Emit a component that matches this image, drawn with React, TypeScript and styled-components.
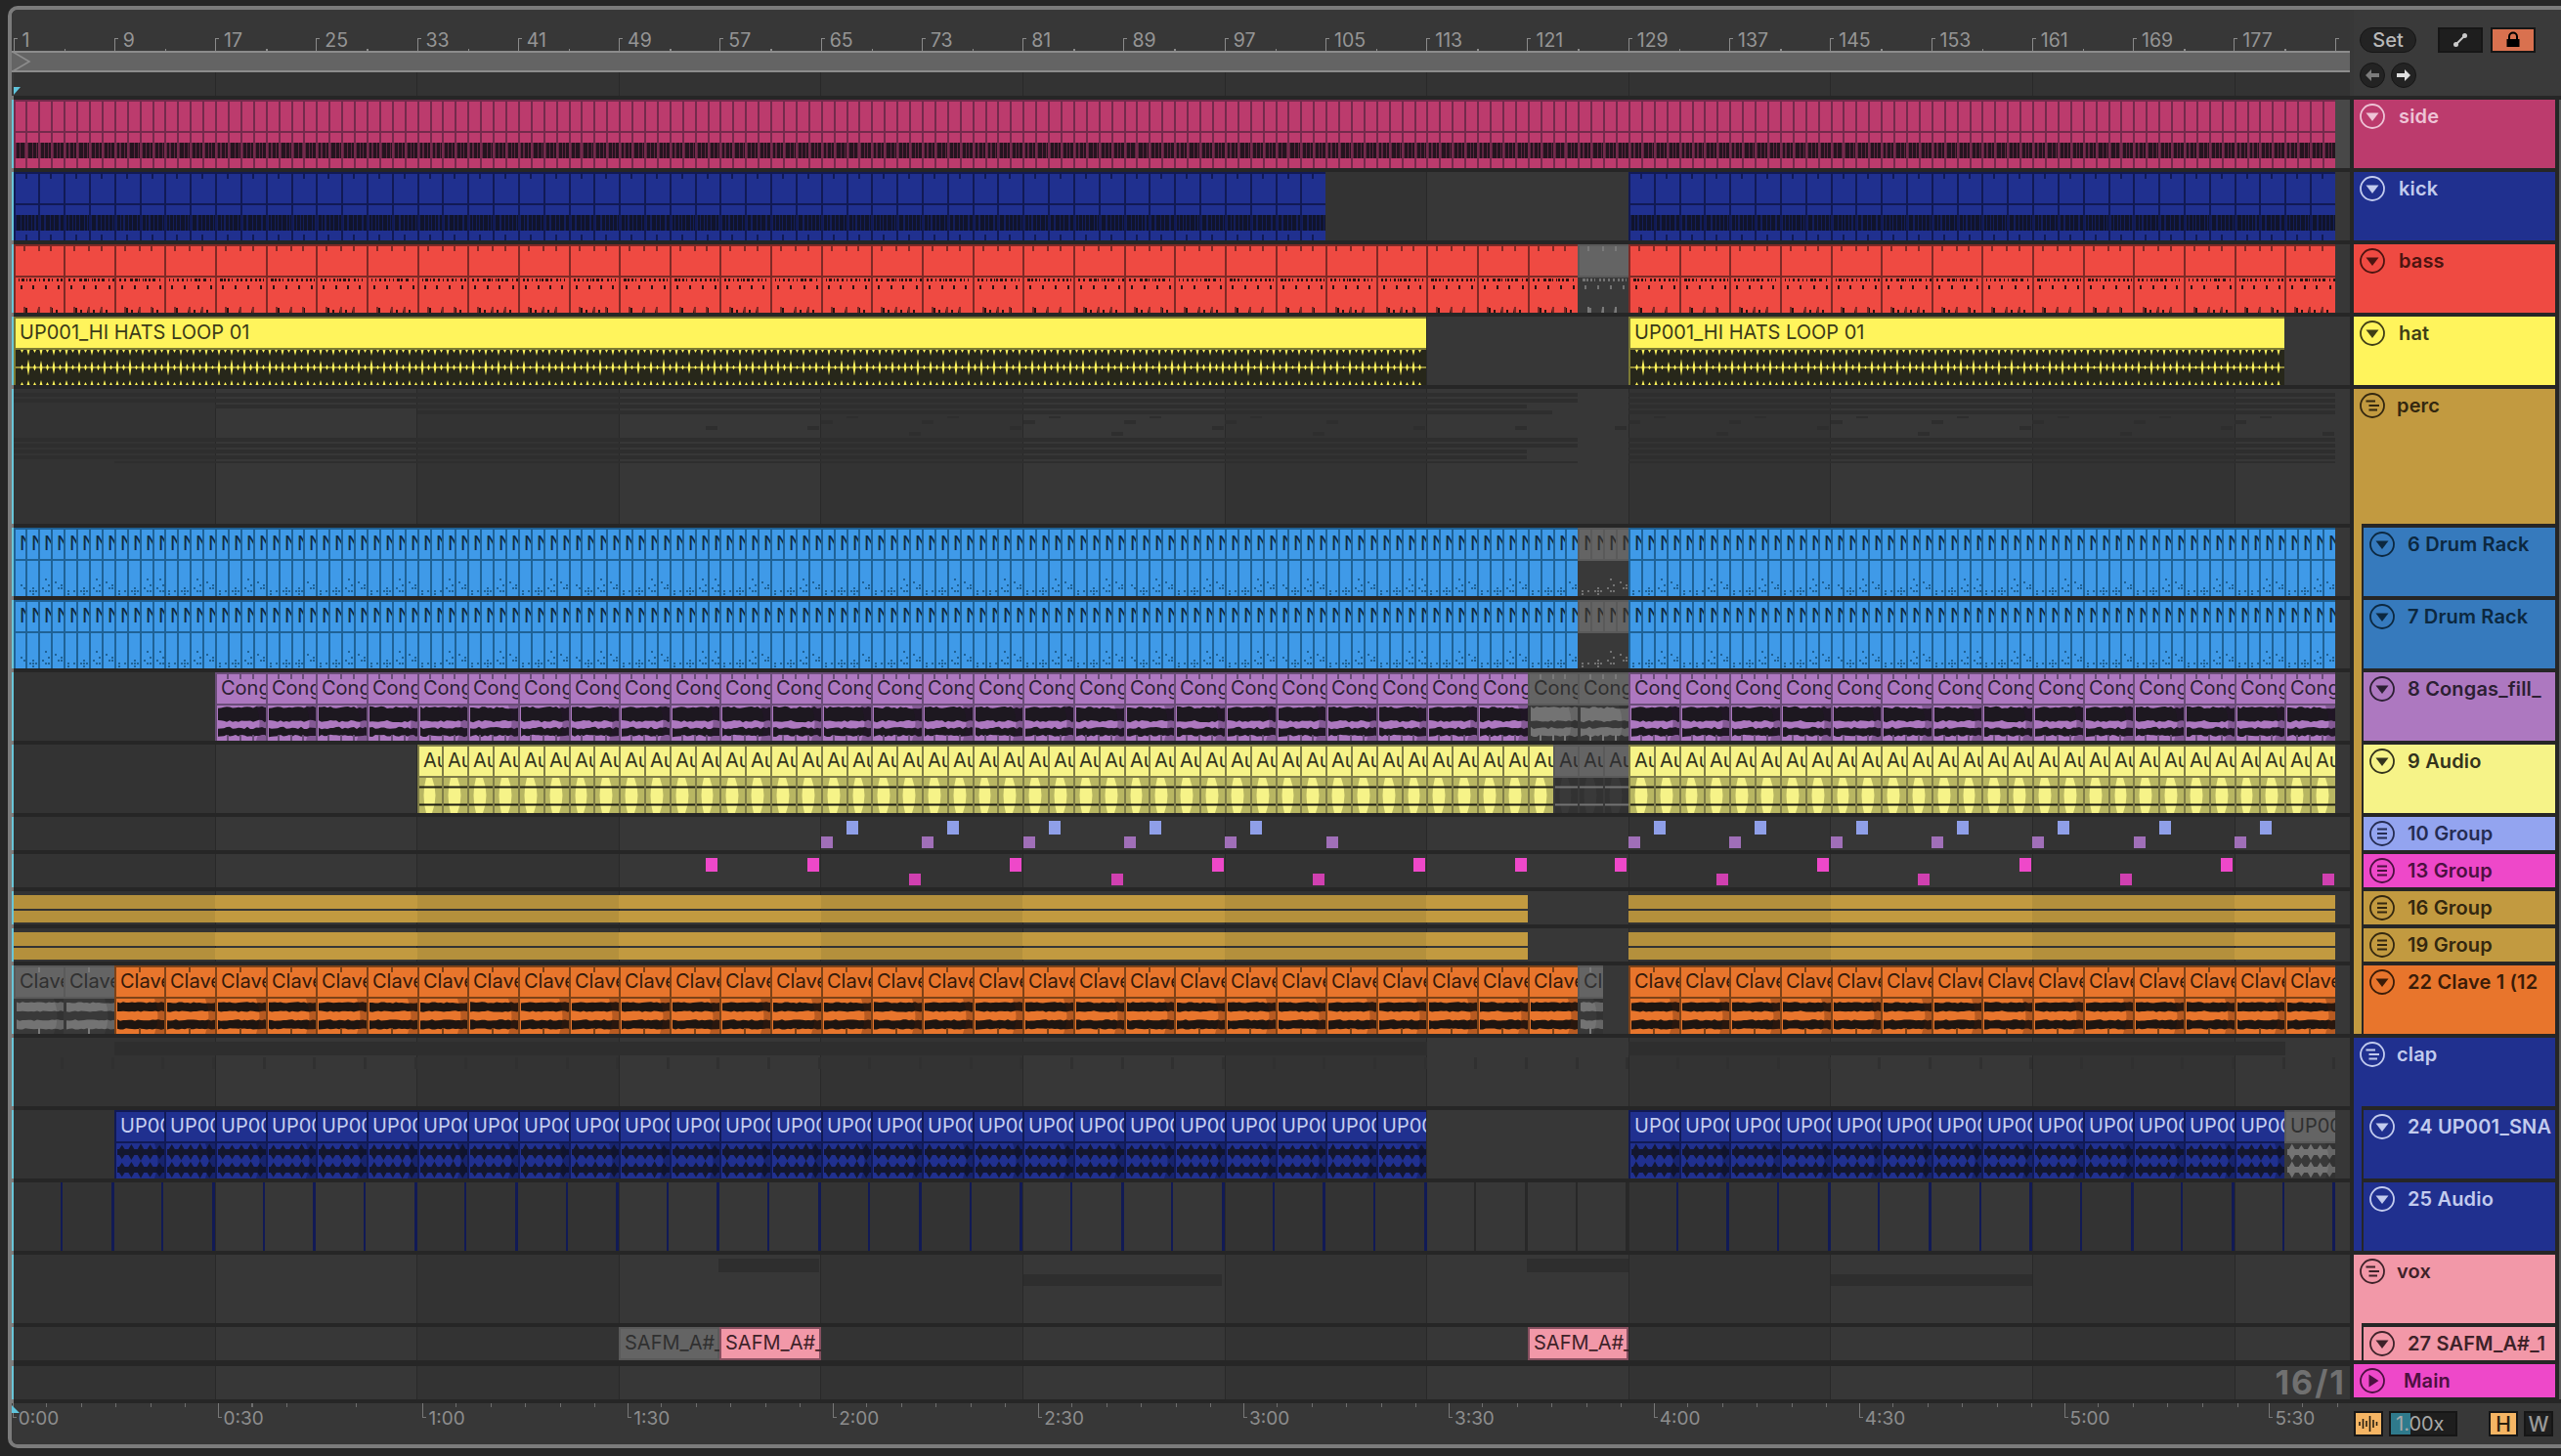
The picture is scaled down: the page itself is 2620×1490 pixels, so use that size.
import React from 'react';
import styled, { createGlobalStyle } from 'styled-components';

const GlobalStyle = createGlobalStyle`
  html, body {
    margin: 0;
    width: 2620px;
    height: 1490px;
    overflow: hidden;
    background: #262626;
    font-family: Inter, "Liberation Sans", sans-serif;
  }
  * { box-sizing: border-box; }
`;

const BAR_PX = 12.91;
const barX = (bar: number) => Math.round(13.5 + (bar - 1) * BAR_PX);
const laneX = (bar: number) => barX(bar) - 14;

const gridStripes = (dark: string, light: string) => `
  repeating-linear-gradient(
    to right,
    ${dark} 0, ${dark} 205.6px, #292929 205.6px, #292929 206.6px,
    ${light} 206.6px, ${light} 412.2px, #292929 412.2px, #292929 413.2px
  )
`;

const Frame = styled.div`
  margin: 6px 0 0 8px;
  width: 2612px;
  height: 1476px;
  border: 4px solid #7b7b7b;
  border-right: 0;
  border-radius: 10px 0 0 10px;
  background: #383838;
  display: flex;
  flex-direction: column;
  overflow: hidden;
`;

const Top = styled.div`
  height: 88px;
  display: flex;
  flex: none;
`;

const TopLeft = styled.div`
  width: 2392px;
  display: flex;
  flex-direction: column;
`;

const BarRuler = styled.div`
  height: 42px;
  display: flex;
  padding-left: 1.5px;
  overflow: hidden;
  background: #373737;
`;

const BarCell = styled.div`
  flex: 0 0 103.28px;
  position: relative;
  padding: 19px 0 0 9px;
  font-size: 19.5px;
  line-height: 24px;
  color: #959595;

  &::before {
    content: '';
    position: absolute;
    left: 0;
    bottom: 0;
    width: 3px;
    height: 12px;
    border-left: 1.5px solid #8a8a8a;
    border-top: 1.5px solid #8a8a8a;
  }
  &::after {
    content: '';
    position: absolute;
    left: 52px;
    bottom: 0;
    width: 1.5px;
    height: 2px;
    background: #8a8a8a;
  }
`;

const LoopBar = styled.div`
  height: 22px;
  border-top: 2px solid #8c8c8c;
  border-bottom: 2px solid #8c8c8c;
  background: #646464;
  position: relative;
`;

const LoopMark = styled.svg`
  position: absolute;
  left: 0;
  top: -2px;
`;

const GridStrip = styled.div`
  flex: 1;
  margin-left: 2px;
  position: relative;
  background: ${gridStripes('#333333', '#333333')};
`;

const PlayheadMark = styled.svg`
  position: absolute;
  left: 0;
  bottom: 1px;
`;

const Controls = styled.div`
  margin-left: 4px;
  padding: 18px 0 0 6px;
  flex: 1;
  background: #3a3a3a;
`;

const ControlRow = styled.div`
  display: flex;
  align-items: center;
  gap: 6px;
  margin-bottom: 10px;
`;

const SetButton = styled.div`
  width: 58px;
  height: 26px;
  border-radius: 13px;
  background: #232323;
  border: 1px solid #161616;
  color: #b9b9b9;
  font-size: 20px;
  font-weight: 500;
  line-height: 24px;
  text-align: center;
  margin-right: 16px;
`;

const SquareButton = styled.div<{ $bg: string }>`
  width: 46px;
  height: 26px;
  border: 2px solid #161616;
  background: ${p => p.$bg};
  display: flex;
  align-items: center;
  justify-content: center;
  margin-right: 2px;
`;

const RoundButton = styled.div`
  width: 26px;
  height: 26px;
  border-radius: 50%;
  background: #232323;
  border: 1px solid #161616;
  display: flex;
  align-items: center;
  justify-content: center;
`;

const Rows = styled.div`
  flex: none;
  display: flex;
  padding-top: 4px;
  padding-bottom: 4px;
  background: #262626;
  background-image: linear-gradient(to right, #7b7b7b 2px, transparent 2px);
`;

const Lanes = styled.div`
  width: 2392px;
  display: flex;
  flex-direction: column;
  gap: 4px;
`;

const Lane = styled.div<{ $h: number; $gapTop?: boolean }>`
  height: ${p => p.$h}px;
  flex: none;
  position: relative;
  border-left: 2px solid #69c6d8;
  margin-top: ${p => (p.$gapTop ? 2 : 0)}px;
  overflow: hidden;
  background: ${gridStripes('#333333', '#373737')};
`;

const Clip = styled.div<{ $bg: string; $line: string; $ring?: boolean }>`
  position: absolute;
  top: 0;
  bottom: 0;
  overflow: hidden;
  background: ${p => p.$bg};
  box-shadow: ${p =>
    p.$ring
      ? `inset 0 0 0 2px ${p.$line}`
      : `inset 2px 0 0 ${p.$line}, inset 0 2px 0 ${p.$line}`};
`;

const ClipTitle = styled.div<{ $color: string; $line: string; $full?: boolean }>`
  height: 34px;
  padding-left: 6px;
  border-bottom: ${p => (p.$full ? 'none' : `2px solid ${p.$line}`)};
  color: ${p => p.$color};
  font-size: 20px;
  line-height: 33px;
  white-space: nowrap;
  overflow: hidden;
`;

const ClipArt = styled.svg`
  position: absolute;
  left: 0;
  top: 0;
  display: block;
`;

const Block = styled.div<{ $c: string }>`
  position: absolute;
  background: ${p => p.$c};
`;

const LaneHint = styled.div`
  position: absolute;
  right: 4px;
  top: 0;
  font-size: 34px;
  line-height: 34px;
  letter-spacing: 2px;
  font-weight: 700;
  color: #707070;
`;

const RowGap = styled.div`
  width: 4px;
  flex: none;
`;

const Headers = styled.div`
  width: 206px;
  flex: none;
  display: flex;
  flex-direction: column;
  gap: 4px;
`;

const TrackHeader = styled.div<{ $bg: string; $fg: string; $h: number }>`
  height: ${p => p.$h}px;
  flex: none;
  background: ${p => p.$bg};
  color: ${p => p.$fg};
  display: flex;
  align-items: flex-start;
  padding: 4px 0 0 6px;
  overflow: hidden;
`;

const TrackName = styled.div<{ $gap?: number }>`
  margin-left: ${p => p.$gap ?? 14}px;
  font-size: 20px;
  font-weight: 600;
  line-height: 26px;
  letter-spacing: 0.15px;
  white-space: nowrap;
`;

const Group = styled.div<{ $bg: string }>`
  background: ${p => p.$bg};
  display: flex;
  flex-direction: column;
  flex: none;
`;

const GroupChildren = styled.div`
  margin-left: 8px;
  padding: 4px 0 0 2px;
  background: #262626;
  display: flex;
  flex-direction: column;
  gap: 4px;
`;

const ScrollEdge = styled.div`
  width: 2px;
  margin-left: 4px;
  background: #5a5a5a;
`;

const Bottom = styled.div`
  flex: 1;
  display: flex;
  min-height: 0;
`;

const TimeRuler = styled.div`
  width: 2392px;
  flex: none;
  display: flex;
  padding-left: 0.7px;
  overflow: hidden;
  position: relative;
  background: #373737;
`;

const TimeCell = styled.div`
  flex: 0 0 209.9px;
  padding: 4px 0 0 6px;
  position: relative;
  font-size: 19px;
  line-height: 24px;
  color: #8d8d8d;
  background: repeating-linear-gradient(to right, transparent 0, transparent 34.5px, #6e6e6e 34.5px, #6e6e6e 35.5px) top / 100% 4px no-repeat;

  &::before {
    content: '';
    position: absolute;
    left: 0;
    top: 0;
    width: 3px;
    height: 14px;
    border-left: 1.5px solid #777;
    border-bottom: 1.5px solid #777;
  }
`;

const TimeMark = styled.svg`
  position: absolute;
  left: 0;
  top: 2px;
`;

const Footer = styled.div`
  flex: 1;
  display: flex;
  align-items: flex-start;
  padding: 8px 0 0 4px;
  background: #383838;
`;

const OrangeButton = styled.div`
  width: 30px;
  height: 26px;
  border: 2px solid #161616;
  background: #f5b564;
  color: #2a2010;
  display: flex;
  align-items: center;
  justify-content: center;
  font-size: 21px;
  font-weight: 500;
`;

const DarkButton = styled(OrangeButton)`
  background: #1e1e1e;
  color: #9a9a9a;
  margin-left: 6px;
`;

const SpeedField = styled.div`
  width: 70px;
  height: 26px;
  margin: 0 32px 0 6px;
  border: 2px solid #161616;
  background: linear-gradient(to right, #2f7a8c 20px, #1e1e1e 20px);
  color: #a8a8a8;
  font-size: 20px;
  line-height: 22px;
  padding-left: 5px;
`;

type Part = { d: string; tone: 'ink' | 'dim' | 'tick' | 'shade' | 'back' };
type Palette = { bg: string; line: string; text: string; ink: string; dim: string; tick: string; shade: string; back?: string };
type Kind = 'comb' | 'bass' | 'hat' | 'drum' | 'conga' | 'audio' | 'clave' | 'up' | 'plain';

const MUTED: Palette = {
  bg: '#646464',
  line: '#5a5a5a',
  text: '#303030',
  ink: '#737373',
  dim: '#4a4a4a',
  tick: '#7a7a7a',
  shade: 'rgba(0,0,0,0.12)',
  back: '#393939',
};

const box = (x: number, y: number, w: number, h: number) => `M${x} ${y}h${w}v${h}h${-w}z`;

const randomizer = (seed: number) => {
  let s = (seed * 7919 + 1013) % 233280;
  return () => {
    s = (s * 9301 + 49297) % 233280;
    return s / 233280;
  };
};

const topTicks = (w: number, fractions: number[]) =>
  fractions
    .map(f => {
      const x = Math.round(w * f) - 1;
      return box(x, 2, 2, 5) + box(x, 64, 2, 6);
    })
    .join('');

const jagged = (w: number, y1: number, y2: number, jitter: number, rnd: () => number) => {
  let top = `M3 ${y1}`;
  let low = '';
  for (let x = 3; x < w; x += 3) {
    top += `L${x} ${(y1 + (rnd() - 0.5) * jitter).toFixed(1)}`;
    low = `L${x} ${(y2 + (rnd() - 0.5) * jitter).toFixed(1)}` + low;
  }
  return `${top}L${w} ${y1}L${w} ${y2}${low}L3 ${y2}z`;
};

const fadeShade = (w: number) => `M${w - 10} 34Q${w - 3} 52 ${w - 10} 70H${w}V34z`;

const artCache = new Map<string, Part[]>();

const makeArt = (kind: Kind, w: number, seed: number, ticks: number[]): Part[] => {
  const key = `${kind}-${w}-${seed}-${ticks.join()}`;
  const cached = artCache.get(key);
  if (cached) return cached;
  const rnd = randomizer(seed + w);
  const parts: Part[] = [];
  if (kind === 'comb') {
    let bars = '';
    for (let x = 3; x < w; ) {
      const bw = 2 + Math.round(rnd() * 2);
      bars += box(x, 44, Math.min(bw, w - x), 16);
      x += bw + 1 + (rnd() > 0.75 ? 1 : 0);
    }
    parts.push({ d: box(2, 44, w - 2, 16), tone: 'dim' }, { d: bars, tone: 'ink' });
  }
  if (kind === 'bass') {
    let dense = '';
    for (let x = 5; x < w - 1; ) {
      const bw = 1 + Math.round(rnd() * 2);
      dense += box(x, 35, bw, 3);
      x += bw + 1 + Math.round(rnd() * 3);
    }
    let spaced = '';
    for (let x = 7; x < w - 2; x += 12 + Math.round(rnd() * 2)) spaced += box(x, 42, 2, 4);
    let stubs = '';
    for (let x = 11; x < w - 2; x += 13) {
      stubs += `M${x} 70L${x + 1} 65H${x + 3}V70z`;
      if (rnd() > 0.5) stubs += box(x + 6, 67, 2, 3);
    }
    parts.push({ d: dense + spaced + stubs, tone: 'ink' });
  }
  if (kind === 'hat') {
    let spikes = box(2, 51.5, w - 2, 1);
    let teeth = '';
    for (let i = 1; i * 6.5 < w - 2; i++) {
      const x = i * 6.5 + 2;
      const big = i % 2 === 0 ? 6 + rnd() * 3 : 2 + rnd() * 2;
      spikes += `M${x - 1.5} 52L${x} ${52 - big}L${x + 1.5} 52L${x} ${52 + big}z`;
      teeth += `M${x - 1.5} 34H${x + 1.5}L${x} ${36 + (i % 2 === 0 ? 4 : 1)}z`;
      teeth += `M${x - 1.5} 70H${x + 1.5}L${x} ${68 - (i % 2 === 0 ? 3 : 1)}z`;
    }
    parts.push({ d: box(2, 34, w - 2, 36), tone: 'dim' }, { d: spikes + teeth, tone: 'ink' });
  }
  if (kind === 'drum') {
    let dots = '';
    for (let y = 52; y < 70; y += 3) {
      for (let x = 4; x < w - 1; x += 3) {
        if (rnd() < (y - 48) / 62) dots += box(x, y, 2, 2);
      }
    }
    parts.push({ d: dots, tone: 'ink' });
  }
  if (kind === 'conga') {
    parts.push(
      { d: jagged(w, 36, 50, 2.5, rnd) + jagged(w, 57, 65, 2.5, rnd), tone: 'ink' },
      { d: fadeShade(w), tone: 'shade' },
    );
  }
  if (kind === 'clave') {
    parts.push(
      { d: jagged(w, 38, 47, 1.5, rnd) + jagged(w, 56, 65, 1.5, rnd), tone: 'ink' },
      { d: fadeShade(w), tone: 'shade' },
    );
  }
  if (kind === 'audio') {
    parts.push(
      { d: `M2 34H9Q4 52 9 70H2z${fadeShade(w)}`, tone: 'shade' },
      { d: box(2, 42.5, w - 2, 2) + box(2, 60.5, w - 2, 2), tone: 'ink' },
    );
  }
  if (kind === 'up') {
    let blobs = box(3, 40, w - 3, 6) + box(3, 58, w - 3, 6);
    for (let x = 3; x < w - 2; x += 9.6) {
      const top = 7 + rnd() * 2;
      blobs += `M${x} 43L${x + 4.8} ${43 - top}L${x + 9.6} 43L${x + 4.8} ${43 + top}z`;
      blobs += `M${x} 61L${x + 4.8} ${61 - top}L${x + 9.6} 61L${x + 4.8} ${61 + top}z`;
    }
    parts.push({ d: blobs, tone: 'ink' }, { d: fadeShade(w), tone: 'shade' });
  }
  if (ticks.length) parts.push({ d: topTicks(w, ticks), tone: 'tick' });
  artCache.set(key, parts);
  return parts;
};

type Seg = [number, number, boolean?];

type ClipLaneProps = {
  h?: number;
  kind: Kind;
  len: number;
  segs: Seg[];
  palette: Palette;
  name?: string;
  ticks?: number[];
  ring?: boolean;
  children?: React.ReactNode;
};

const ClipLane = ({ h = 70, kind, len, segs, palette, name, ticks = [], ring, children }: ClipLaneProps) => (
  <Lane $h={h}>
    {children}
    {segs.flatMap(([from, to, muted], s) => {
      const clips = [];
      for (let b = from, i = 0; b < to; b += len, i++) {
        const pal = muted ? MUTED : palette;
        const left = laneX(b);
        const width = barX(Math.min(b + len, to)) - barX(b);
        const parts = h === 70 ? makeArt(kind, width, i % 4, ticks) : [];
        const fills = { ink: pal.ink, dim: pal.dim, tick: muted ? pal.tick : pal.line, shade: pal.shade, back: pal.back ?? pal.bg };
        clips.push(
          <Clip key={`${s}-${b}`} $bg={pal.bg} $line={pal.line} $ring={ring} style={{ left, width }}>
            <ClipTitle $color={pal.text} $line={pal.line} $full={h !== 70}>
              {name}
            </ClipTitle>
            {h === 70 && (
              <ClipArt width={width} height={h} viewBox={`0 0 ${width} ${h}`}>
                {pal.back && <path d={box(0, 34, width, 36)} fill={pal.back} />}
                {parts.map((p, n) => (
                  <path key={n} d={p.d} fill={muted && p.tone === 'dim' ? pal.back : fills[p.tone]} />
                ))}
              </ClipArt>
            )}
          </Clip>,
        );
      }
      return clips;
    })}
  </Lane>
);

const SIDE: Palette = { bg: '#bc3b6d', line: '#742a4c', text: '#000', ink: '#25141f', dim: '#5e2440', tick: '#742a4c', shade: 'transparent' };
const KICK: Palette = { bg: '#20308f', line: '#111a55', text: '#c4cdf0', ink: '#10142c', dim: '#141e5a', tick: '#111a55', shade: 'transparent' };
const BASS: Palette = { bg: '#ef4a42', line: '#7e2a26', text: '#000', ink: '#2a1210', dim: '#000', tick: '#2a1210', shade: 'transparent' };
const HAT: Palette = { bg: '#fff45c', line: '#7c7a34', text: '#3b3a18', ink: '#fff45c', dim: '#27271a', tick: '#3b3a18', shade: 'transparent' };
const DRUM: Palette = { bg: '#3f9ae8', line: '#1f6296', text: '#0e2b42', ink: '#1f6296', dim: '#000', tick: '#1f6296', shade: 'transparent' };
const CONGA: Palette = { bg: '#ad78c0', line: '#6a4d78', text: '#2c1f33', ink: '#1d1820', dim: '#000', tick: '#1d1820', shade: 'rgba(40,20,50,0.3)' };
const AUDIO: Palette = { bg: '#f6f388', line: '#7f7d48', text: '#33331c', ink: '#1e1e12', dim: '#000', tick: '#7f7d48', shade: 'rgba(70,70,30,0.35)' };
const CLAVE: Palette = { bg: '#e8752c', line: '#7c4218', text: '#33190a', ink: '#1e1510', dim: '#000', tick: '#33190a', shade: 'rgba(70,30,10,0.3)' };
const SNARE: Palette = { bg: '#20308f', line: '#111a55', text: '#c4cdf0', ink: '#14172f', dim: '#000', tick: '#111a55', shade: 'rgba(10,14,50,0.35)' };
const VOX: Palette = { bg: '#f298a8', line: '#875060', text: '#3e2229', ink: '#000', dim: '#000', tick: '#000', shade: 'transparent' };

const BLUE_SQUARES = [0, 1, 2, 3, 4].map(k => 866 + k * 103.3).concat([0, 1, 2, 3, 4, 5, 6].map(k => 1692 + k * 103.3));
const PURPLE_SQUARES = [0, 1, 2, 3, 4, 5].map(k => 840 + k * 103.3).concat([0, 1, 2, 3, 4, 5, 6].map(k => 1666 + k * 103.3));
const PINK_UPPER = [722, 826, 1033, 1240, 1446, 1550, 1652, 1859, 2066, 2272];
const PINK_LOWER = [930, 1137, 1343, 1756, 1962, 2169, 2376];

const rect = (x: number, top: number, width: number, height: number) => ({ left: x - 14, top, width, height });
const GHOST = '#2e2e2e';

const PercOverview = () => (
  <>
    {[
      [4, 14, 1614],
      [10, 14, 1614],
      [16, 220, 1562],
      [22, 427, 1588],
      [50, 14, 1614],
      [56, 14, 1614],
      [62, 14, 1562],
      [68, 14, 1562],
    ].flatMap(([y, a, b]) => [
      <Block key={`${y}a`} $c={GHOST} style={rect(a, y, b - a, 4)} />,
      <Block key={`${y}b`} $c={GHOST} style={rect(1666, y, 723, 4)} />,
    ])}
    <Block $c={GHOST} style={rect(117, 74, 1497, 2)} />
    <Block $c={GHOST} style={rect(1666, 74, 723, 2)} />
    {BLUE_SQUARES.map(x => <Block key={`b${x}`} $c={GHOST} style={rect(x, 28, 12, 2)} />)}
    {PURPLE_SQUARES.map(x => <Block key={`p${x}`} $c={GHOST} style={rect(x, 32, 12, 4)} />)}
    {PINK_UPPER.map(x => <Block key={`u${x}`} $c={GHOST} style={rect(x, 38, 12, 4)} />)}
    {PINK_LOWER.map(x => <Block key={`l${x}`} $c={GHOST} style={rect(x, 44, 12, 4)} />)}
  </>
);

const GoldLane = () => {
  const chunks: [number, number, boolean][] = [];
  for (let k = 0; k < 12; k++) {
    const from = 1 + k * 16;
    const to = from + 16;
    const light = k % 2 === 1;
    if (from < 121) chunks.push([from, Math.min(to, 121), light]);
    if (to > 129) chunks.push([Math.max(from, 129), Math.min(to, 185), light]);
  }
  return (
    <Lane $h={34}>
      {chunks.flatMap(([a, b, light]) => [
        <Block key={`${a}u`} $c={light ? '#c29a40' : '#b4903c'} style={{ left: laneX(a), width: barX(b) - barX(a), top: 4, height: 14 }} />,
        <Block key={`${a}d`} $c={light ? '#c29a40' : '#b4903c'} style={{ left: laneX(a), width: barX(b) - barX(a), top: 20, height: 12 }} />,
      ])}
    </Lane>
  );
};

const HAIRLINES = Array.from({ length: 46 }, (_, k) => 62 + k * 51.65);

type IconKind = 'down' | 'group' | 'subgroup' | 'play';

const TrackIcon = ({ kind }: { kind: IconKind }) => (
  <svg width="26" height="26" viewBox="0 0 26 26" style={{ flex: 'none' }}>
    <circle cx="13" cy="13" r="12" fill="none" stroke="currentColor" strokeWidth="1.8" />
    {kind === 'down' && <path d="M6.5 9.5H19.5L13 18z" fill="currentColor" />}
    {kind === 'play' && <path d="M9.5 6.5L19.5 13L9.5 19.5z" fill="currentColor" />}
    {kind === 'group' && <path d="M6.5 8.5H16M9.5 13H20M9.5 17.5H18" stroke="currentColor" strokeWidth="2" fill="none" />}
    {kind === 'subgroup' && <path d="M8 8.5H18M8 13H18M8 17.5H18" stroke="currentColor" strokeWidth="2" fill="none" />}
  </svg>
);

const Track = ({ name, bg, fg, h = 70, icon = 'down', gap }: { name: string; bg: string; fg: string; h?: number; icon?: IconKind; gap?: number }) => (
  <TrackHeader $bg={bg} $fg={fg} $h={h}>
    <TrackIcon kind={icon} />
    <TrackName $gap={gap}>{name}</TrackName>
  </TrackHeader>
);

const BARS = Array.from({ length: 24 }, (_, k) => 1 + k * 8);
const TIMES = ['0:00', '0:30', '1:00', '1:30', '2:00', '2:30', '3:00', '3:30', '4:00', '4:30', '5:00', '5:30'];

export default function App() {
  return (
    <>
      <GlobalStyle />
      <Frame>
        <Top>
          <TopLeft>
            <BarRuler>
              {BARS.map(b => (
                <BarCell key={b}>{b < 185 ? b : ''}</BarCell>
              ))}
            </BarRuler>
            <LoopBar>
              <LoopMark width="20" height="22" viewBox="0 0 20 22">
                <path d="M1 1L18 11L1 21" fill="none" stroke="#8c8c8c" strokeWidth="1.6" />
              </LoopMark>
            </LoopBar>
            <GridStrip>
              <PlayheadMark width="7" height="8" viewBox="0 0 7 8">
                <path d="M0 0H7L0 8z" fill="#5fc4dc" />
              </PlayheadMark>
            </GridStrip>
          </TopLeft>
          <Controls>
            <ControlRow>
              <SetButton>Set</SetButton>
              <SquareButton $bg="#1e1e1e">
                <svg width="16" height="16" viewBox="0 0 16 16">
                  <path d="M3.5 12.5L12.5 3.5" stroke="#c9c9c9" strokeWidth="2" />
                  <circle cx="3.5" cy="12.5" r="2.5" fill="#c9c9c9" />
                  <circle cx="12.5" cy="3.5" r="2.5" fill="#c9c9c9" />
                </svg>
              </SquareButton>
              <SquareButton $bg="#d9714f">
                <svg width="16" height="18" viewBox="0 0 16 18">
                  <path d="M4 8V5.5a4 4 0 0 1 8 0V8" fill="none" stroke="#000" strokeWidth="2" />
                  <path d="M1.5 8H14.5V16H1.5z" fill="#000" />
                </svg>
              </SquareButton>
            </ControlRow>
            <ControlRow>
              <RoundButton>
                <svg width="16" height="14" viewBox="0 0 16 14">
                  <path d="M1 7L7 1V5H15V9H7V13z" fill="#7c7c7c" />
                </svg>
              </RoundButton>
              <RoundButton>
                <svg width="16" height="14" viewBox="0 0 16 14">
                  <path d="M15 7L9 1V5H1V9H9V13z" fill="#e0e0e0" />
                </svg>
              </RoundButton>
            </ControlRow>
          </Controls>
        </Top>

        <Rows>
          <Lanes>
            <ClipLane kind="comb" len={1} segs={[[1, 185]]} palette={SIDE}>
              <Block $c="#484848" style={rect(2389, 0, 15, 70)} />
            </ClipLane>
            <ClipLane kind="comb" len={2} segs={[[1, 105], [129, 185]]} palette={KICK} ticks={[0.5]} />
            <ClipLane kind="bass" len={4} segs={[[1, 125], [125, 129, true], [129, 185]]} palette={BASS} ticks={[0.22, 0.5, 0.75]} />
            <ClipLane kind="hat" len={200} segs={[[1, 113], [129, 181]]} palette={HAT} name="UP001_HI HATS LOOP 01" />
            <Lane $h={138}>
              <PercOverview />
            </Lane>
            <ClipLane kind="drum" len={1} segs={[[1, 125], [125, 129, true], [129, 185]]} palette={DRUM} name="N" />
            <ClipLane kind="drum" len={1} segs={[[1, 125], [125, 129, true], [129, 185]]} palette={DRUM} name="N" />
            <ClipLane kind="conga" len={4} segs={[[17, 121], [121, 129, true], [129, 185]]} palette={CONGA} name="Congas_fill" ticks={[0.25, 0.5, 0.75]} />
            <ClipLane kind="audio" len={2} segs={[[33, 123], [123, 129, true], [129, 185]]} palette={AUDIO} name="Audio" />
            <Lane $h={34}>
              {BLUE_SQUARES.map(x => <Block key={x} $c="#8f9fe8" style={rect(x, 4, 12, 14)} />)}
              {PURPLE_SQUARES.map(x => <Block key={x} $c="#a06fb8" style={rect(x, 20, 12, 12)} />)}
            </Lane>
            <Lane $h={34}>
              {PINK_UPPER.map(x => <Block key={x} $c="#ee48c9" style={rect(x, 4, 12, 14)} />)}
              {PINK_LOWER.map(x => <Block key={x} $c="#d040b0" style={rect(x, 20, 12, 12)} />)}
            </Lane>
            <GoldLane />
            <GoldLane />
            <ClipLane kind="clave" len={4} segs={[[1, 9, true], [9, 125], [125, 127, true], [129, 185]]} palette={CLAVE} name="Clave 1" ticks={[0.5]} />
            <Lane $h={70}>
              <Block $c={GHOST} style={rect(117, 4, 1343, 14)} />
              <Block $c={GHOST} style={rect(1666, 4, 672, 14)} />
              {HAIRLINES.map(x => <Block key={x} $c="#303030" style={rect(x, 20, 3, 12)} />)}
            </Lane>
            <ClipLane kind="up" len={4} segs={[[9, 113], [129, 181], [181, 185, true]]} palette={SNARE} name="UP001_SNARE" />
            <Lane $h={70}>
              {HAIRLINES.map((x, k) => (
                <Block key={x} $c={x > 1460 && x < 1666 ? '#282828' : '#111a55'} style={rect(x, 0, k % 2 ? 3 : 2, 70)} />
              ))}
            </Lane>
            <Lane $h={70}>
              <Block $c={GHOST} style={rect(735, 4, 103, 14)} />
              <Block $c={GHOST} style={rect(1562, 4, 104, 14)} />
              <Block $c={GHOST} style={rect(1047, 20, 203, 12)} />
              <Block $c={GHOST} style={rect(1873, 20, 206, 12)} />
            </Lane>
            <ClipLane h={34} kind="plain" len={8} segs={[[49, 57, true], [57, 65], [121, 129]]} palette={VOX} name="SAFM_A#_1" ring />
            <Lane $h={34} $gapTop>
              <LaneHint>16/1</LaneHint>
            </Lane>
          </Lanes>
          <RowGap />
          <Headers>
            <Track name="side" bg="#bc3b6d" fg="#eec3d6" />
            <Track name="kick" bg="#20308f" fg="#c2cbee" />
            <Track name="bass" bg="#ef4a42" fg="#4c1410" />
            <Track name="hat" bg="#fff45c" fg="#403e16" />
            <Group $bg="#c29a40">
              <Track name="perc" bg="#c29a40" fg="#33270f" h={138} icon="group" gap={12} />
              <GroupChildren>
                <Track name="6 Drum Rack" bg="#367abd" fg="#0c2840" gap={13} />
                <Track name="7 Drum Rack" bg="#367abd" fg="#0c2840" gap={13} />
                <Track name="8 Congas_fill_" bg="#ad78c0" fg="#2c1f33" gap={13} />
                <Track name="9 Audio" bg="#f6f388" fg="#33331c" gap={13} />
                <Track name="10 Group" bg="#93a4f0" fg="#252c52" h={34} icon="subgroup" gap={13} />
                <Track name="13 Group" bg="#ee48c9" fg="#4c1040" h={34} icon="subgroup" gap={13} />
                <Track name="16 Group" bg="#c29a40" fg="#33270f" h={34} icon="subgroup" gap={13} />
                <Track name="19 Group" bg="#c29a40" fg="#33270f" h={34} icon="subgroup" gap={13} />
                <Track name="22 Clave 1 (12" bg="#e8752c" fg="#3a1c08" gap={13} />
              </GroupChildren>
            </Group>
            <Group $bg="#20308f">
              <Track name="clap" bg="#20308f" fg="#c2cbee" icon="group" gap={12} />
              <GroupChildren>
                <Track name="24 UP001_SNA" bg="#20308f" fg="#c2cbee" gap={13} />
                <Track name="25 Audio" bg="#20308f" fg="#c2cbee" gap={13} />
              </GroupChildren>
            </Group>
            <Group $bg="#f298a8">
              <Track name="vox" bg="#f298a8" fg="#3e2229" icon="group" gap={12} />
              <GroupChildren>
                <Track name="27 SAFM_A#_1" bg="#f298a8" fg="#3e2229" h={34} gap={13} />
              </GroupChildren>
            </Group>
            <Track name="Main" bg="#ee48c9" fg="#4c1040" h={34} icon="play" gap={19} />
          </Headers>
          <ScrollEdge />
        </Rows>

        <Bottom>
          <TimeRuler>
            {TIMES.map(t => (
              <TimeCell key={t}>{t}</TimeCell>
            ))}
            <TimeMark width="8" height="8" viewBox="0 0 8 8">
              <path d="M0 0L8 8H0z" fill="#5fc4dc" />
            </TimeMark>
          </TimeRuler>
          <Footer>
            <OrangeButton>
              <svg width="20" height="18" viewBox="0 0 20 18">
                <path d="M1 7V11M4.5 4V14M8 6V12M11.5 1V17M15 5V13M18.5 7V11" stroke="#2a2010" strokeWidth="1.6" />
              </svg>
            </OrangeButton>
            <SpeedField>1.00x</SpeedField>
            <OrangeButton>H</OrangeButton>
            <DarkButton>W</DarkButton>
          </Footer>
        </Bottom>
      </Frame>
    </>
  );
}
